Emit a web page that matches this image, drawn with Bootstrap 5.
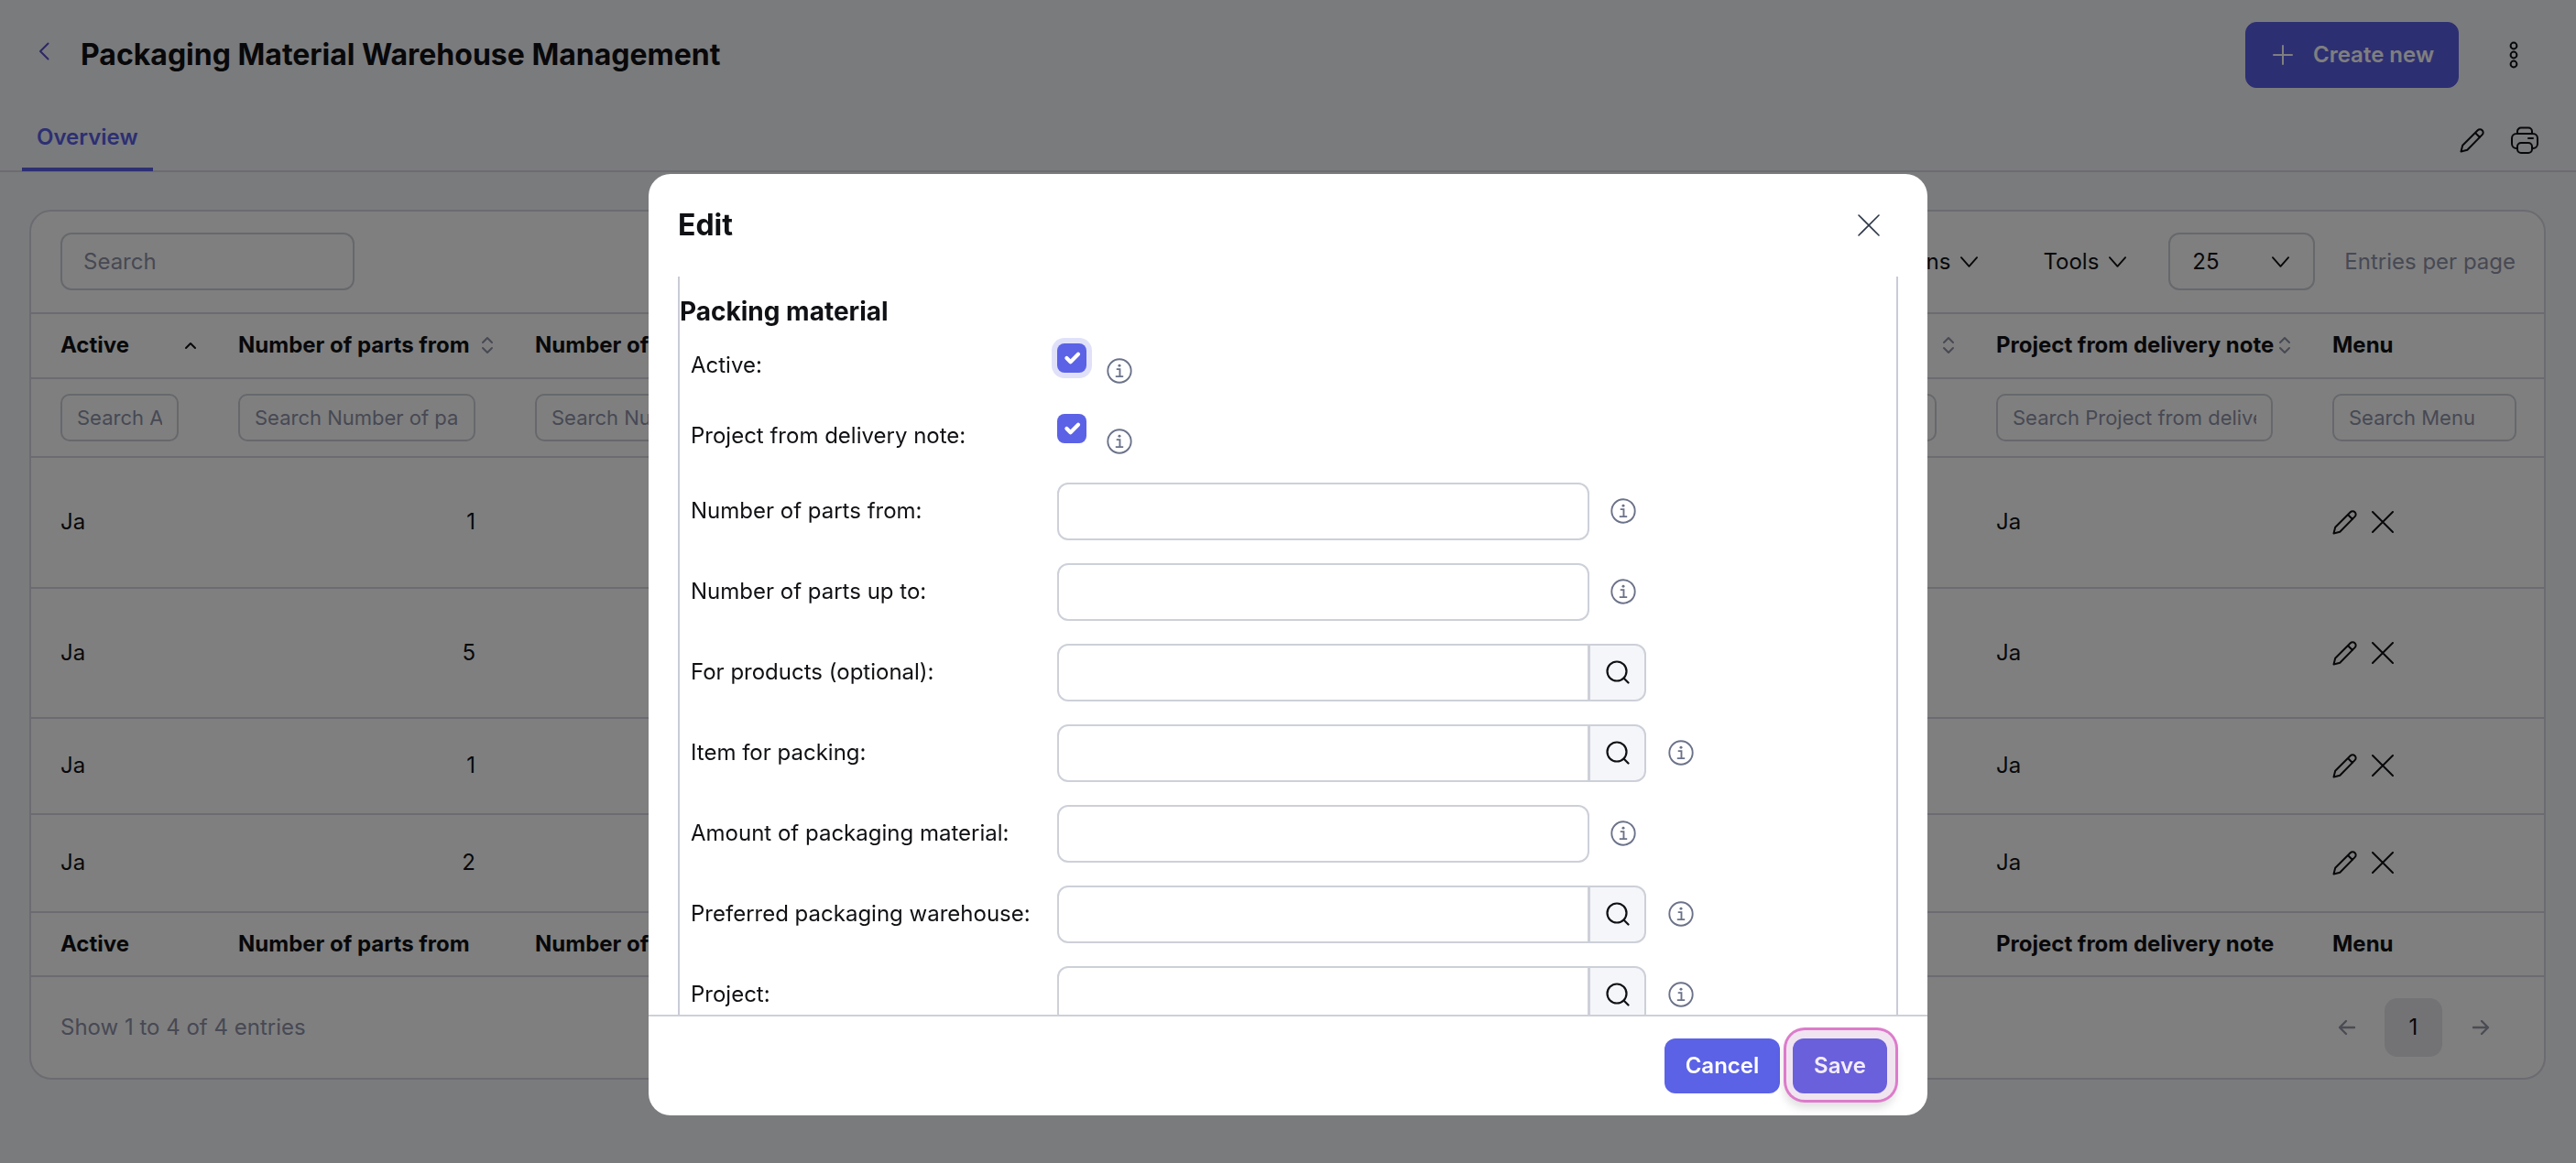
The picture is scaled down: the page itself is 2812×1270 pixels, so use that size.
<!DOCTYPE html>
<html lang="en">
<head>
    <meta charset="UTF-8">
    <meta name="viewport" content="width=device-width, initial-scale=1.0">
    <title>Packaging Material Warehouse Management</title>
    <link href="https://cdn.jsdelivr.net/npm/bootstrap@5.3.0/dist/css/bootstrap.min.css" rel="stylesheet">
    <style>
        body { font-family: Inter, "Liberation Sans", sans-serif; font-size: 24px; color: #101114; background: #f5f6fa; height: 1270px; }
        svg { display: block; flex: none; }
        .ico-line { fill: none; stroke: currentColor; stroke-width: 2; stroke-linecap: round; stroke-linejoin: round; }

        .top-bar { height: 120px; padding: 0 62px 0 42px; }
        .back-ico { color: #5a4fc8; margin-top: -8px; margin-right: 34px; }
        .page-title { font-size: 32px; font-weight: 700; line-height: 40px; margin: 0; }
        .create-btn { width: 233px; height: 72px; border-radius: 12px; font-size: 24px; font-weight: 600; background: #5b5fe6; border-color: #5b5fe6; color: #fff; gap: 22px; padding: 0 0 0 29px; }
        .more-ico { margin-left: 54px; }
        .tab-bar { height: 68px; padding: 0 41px 0 24px; border-bottom: 2px solid #d6d7e2; }
        .tab-bar .nav-link { height: 68px; padding: 13px 16px 0; font-size: 24px; font-weight: 600; line-height: 36px; color: #5b5fe6; border-bottom: 4px solid #5b5fe6; }
        .tab-icons { gap: 28px; }

        .list-card { margin: 41px 33px 0 32px; height: 950px; border: 2px solid #d6d7e2; border-radius: 24px; background: #fff; }
        .list-tools { height: 113px; padding: 0 31px 0 32px; border-bottom: 2px solid #d6d7e2; }
        .list-tools .form-control { width: 321px; padding-left: 23px; }
        .form-control, .form-select { height: 63px; font-size: 24px; border: 2px solid #cdd0d8; border-radius: 12px; color: #101114; }
        .form-control::placeholder { color: #8e92a8; }
        .tool-btn { font-size: 24px; color: #101114; border: 0; padding: 0; gap: 10px; }
        .tool-gap { margin-left: 70px; }
        .list-tools .form-select { width: 160px; margin: 0 32px 0 45px; padding: 0 0 0 24px; background-image: url("data:image/svg+xml,%3csvg xmlns='http://www.w3.org/2000/svg' viewBox='0 0 22 14'%3e%3cpath fill='none' stroke='%23101114' stroke-width='2' stroke-linecap='round' stroke-linejoin='round' d='M2 2l9 10 9-10'/%3e%3c/svg%3e"); background-position: right 25px center; background-size: 21px 14px; }
        .muted-txt { color: #8e92a8; }

        .list-table { table-layout: fixed; width: 2743px; margin: 0; font-size: 24px; --bs-table-bg: transparent; }
        .list-table col:nth-child(1) { width: 193px; }
        .list-table col:nth-child(2) { width: 324px; }
        .list-table col:nth-child(3) { width: 330px; }
        .list-table col:nth-child(4) { width: 320px; }
        .list-table col:nth-child(5) { width: 500px; }
        .list-table col:nth-child(6) { width: 445px; }
        .list-table col:nth-child(7) { width: 367px; }
        .list-table col:nth-child(8) { width: 265px; }
        .list-table > :not(caption) > * > * { border-bottom: 2px solid #d6d7e2; padding: 0 32px 0 33px; vertical-align: middle; color: #101114; white-space: nowrap; overflow: hidden; }
        .list-table th { font-weight: 700; }
        .list-table tr > :first-child { padding-left: 32px; }
        .list-table tr > :last-child { padding-right: 31px; }
        .head-row { height: 70px; }
        .head-row th { padding-right: 12px !important; }
        .filter-row { height: 86px; }
        .filter-row .form-control { height: 52px; font-size: 22px; padding: 0 16px; border-radius: 10px; font-weight: 400; }
        .list-table tbody tr:nth-child(1) { height: 143px; }
        .list-table tbody tr:nth-child(2) { height: 142px; }
        .list-table tbody tr:nth-child(3) { height: 105px; }
        .list-table tbody tr:nth-child(4) { height: 107px; }
        .row-icons { gap: 15px; }
        .sort-ico { color: #8e92a8; }
        .sort-up { color: #101114; }
        .list-foot { height: 112px; padding: 0 38px 0 32px; }
        .pager { gap: 11px; margin: 0; }
        .pager .page-link { width: 63px; height: 64px; border: 0; border-radius: 14px; background: transparent; color: #101114; font-size: 24px; display: flex; align-items: center; justify-content: center; padding: 0; }
        .pager .page-link.cur { background: #e6e6ec; }
        .pager .page-link.off { color: #9799a8; }
        .pager .page-link.off .ico-line { stroke-width: 2.4; }

        .modal-dialog.edit-dialog { max-width: 1396px; margin: 190px auto 0; }
        .edit-content { height: 1028px; border: 0; border-radius: 24px; overflow: hidden; }
        .edit-content .modal-header { height: 112px; flex: none; padding: 0 52px 0 32px; border: 0; }
        .modal-title { font-size: 32px; font-weight: 700; line-height: 40px; }
        .close-btn { border: 0; padding: 0; color: #2d3748; }
        .close-btn path { fill: none; stroke: currentColor; stroke-width: 1.6; stroke-linecap: round; }
        .edit-body { padding: 0 32px; overflow: hidden; flex: 1 1 0; min-height: 0; }
        .edit-set { border-left: 2px solid #c9cbd6; border-right: 2px solid #c9cbd6; padding-top: 21px; min-height: 820px; }
        .set-title { font-size: 28px; font-weight: 700; line-height: 34px; margin: 0 0 3px; }
        .fld-row { height: 88px; padding-left: 12px; }
        .fld-row.chk-row { height: 77px; align-items: flex-start !important; }
        .fld-label { width: 400px; flex: none; margin: 0; }
        .chk-row .fld-label { padding-top: 21px; line-height: 36px; }
        .fld-row .form-control { width: 581px; flex: none; }
        .fld-row .input-group { width: 644px; flex: none; }
        .fld-row .input-group-text { width: 63px; height: 63px; padding: 0; justify-content: center; background: #f5f6fa; border: 2px solid #cdd0d8; border-radius: 0 12px 12px 0; color: #101114; }
        .info-ico { color: #6b7289; margin-left: 23px; }
        .chk-row .form-check-input { width: 32px; height: 32px; margin: 15px 0 0; border: 0; border-radius: 8px; background-color: #5b62e6; background-size: 28px; }
        .chk-row .ring { box-shadow: 0 0 0 6px #e0e1f9; }
        .chk-row .info-ico { margin: 31px 0 0 22px; }
        .edit-content .modal-footer { height: 110px; flex: none; padding: 0 44px 0 0; border-top: 2px solid #cdd0d8; gap: 14px; align-items: flex-start; }
        .foot-btn { height: 60px; margin: 24px 0 0; padding: 0; font-size: 24px; font-weight: 600; border-radius: 12px; border: 0; color: #fff; background: #5b62e6; }
        .foot-cancel { width: 126px; }
        .foot-save { width: 103px; background: #6a60db; color: #f3ecfa; box-shadow: 1px -1px 0 8px #f0e4f1, 1px -1px 0 11px #dd7bcb, 0 6px 10px 10px rgba(0,0,0,.12); }
    </style>
</head>
<body class="overflow-hidden">
    <svg width="0" height="0" class="position-absolute">
        <defs>
            <symbol id="i-pencil" viewBox="0 0 28 28"><path class="ico-line" d="M1.500 26.500l1.700-6.800L19.700 3.200a3.400 3.400 0 0 1 4.900 0 3.400 3.400 0 0 1 0 4.900L8.300 24.800zM17 6l5 5"/></symbol>
            <symbol id="i-cross" viewBox="0 0 24 24"><path class="ico-line" d="M1 1l22 22M23 1L1 23"/></symbol>
            <symbol id="i-info" viewBox="0 0 30 30"><circle cx="15" cy="15" r="13.600" fill="none" stroke="currentColor" stroke-width="2"/><path fill="none" stroke="currentColor" stroke-width="2" d="M11.500 13h4v8M10.500 21.500h9"/><circle cx="15" cy="8.800" r="1.600" fill="currentColor"/></symbol>
            <symbol id="i-search" viewBox="0 0 26 26"><circle cx="12" cy="12" r="10.500" fill="none" stroke="currentColor" stroke-width="2.200"/><path fill="none" stroke="currentColor" stroke-width="2.200" stroke-linecap="round" d="M19.500 19.500l5 5"/></symbol>
            <symbol id="i-sort" viewBox="0 0 14 20"><path class="ico-line" d="M2 7l5-5 5 5M2 13l5 5 5-5"/></symbol>
            <symbol id="i-down" viewBox="0 0 22 14"><path class="ico-line" d="M2 2l9 10 9-10"/></symbol>
        </defs>
    </svg>

    <header class="top-bar d-flex align-items-center">
        <svg class="back-ico" width="12" height="20" viewBox="0 0 12 20"><path class="ico-line" d="M10.500 1.500L2 10l8.500 8.500"/></svg>
        <h1 class="page-title">Packaging Material Warehouse Management</h1>
        <button type="button" class="btn create-btn d-flex align-items-center ms-auto">
            <svg width="22" height="22" viewBox="0 0 22 22"><path class="ico-line" d="M11 1v20M1 11h20"/></svg>
            Create new
        </button>
        <svg class="more-ico" width="12" height="32" viewBox="0 0 12 32" fill="none" stroke="#101114" stroke-width="2"><circle cx="6" cy="6" r="3.400"/><circle cx="6" cy="16" r="3.400"/><circle cx="6" cy="26" r="3.400"/></svg>
    </header>

    <div class="tab-bar d-flex align-items-center justify-content-between">
        <ul class="nav">
            <li class="nav-item"><a class="nav-link" href="#">Overview</a></li>
        </ul>
        <div class="d-flex align-items-center tab-icons">
            <svg width="28" height="28"><use href="#i-pencil"/></svg>
            <svg width="30" height="30" viewBox="0 0 30 30"><path class="ico-line" d="M7 24H6a5 5 0 0 1-5-5v-6a5 5 0 0 1 5-5h18a5 5 0 0 1 5 5v6a5 5 0 0 1-5 5h-1M7 8V5.500a4 4 0 0 1 4-4h8a4 4 0 0 1 4 4V8M11 18h8a4 4 0 0 1 4 4v3a4 4 0 0 1-4 4h-8a4 4 0 0 1-4-4v-3a4 4 0 0 1 4-4zM19 13h5"/></svg>
        </div>
    </div>

    <div class="card list-card">
        <div class="list-tools d-flex align-items-center">
            <input type="text" class="form-control" placeholder="Search">
            <button type="button" class="btn tool-btn d-flex align-items-center ms-auto">Columns <svg width="21" height="14"><use href="#i-down"/></svg></button>
            <button type="button" class="btn tool-btn tool-gap d-flex align-items-center">Tools <svg width="21" height="14"><use href="#i-down"/></svg></button>
            <select class="form-select"><option>25</option></select>
            <span class="muted-txt">Entries per page</span>
        </div>
        <table class="table list-table">
            <colgroup><col><col><col><col><col><col><col><col></colgroup>
            <thead id="tableHead"></thead>
            <tbody id="tableBody"></tbody>
            <tfoot id="tableFoot"></tfoot>
        </table>
        <div class="list-foot d-flex align-items-center justify-content-between">
            <span class="muted-txt">Show 1 to 4 of 4 entries</span>
            <ul class="pagination pager">
                <li class="page-item"><a class="page-link off" href="#"><svg width="20" height="20" viewBox="0 0 20 20"><path class="ico-line" d="M18 10H3M9 3l-7 7 7 7"/></svg></a></li>
                <li class="page-item"><a class="page-link cur" href="#">1</a></li>
                <li class="page-item"><a class="page-link off" href="#"><svg width="20" height="20" viewBox="0 0 20 20"><path class="ico-line" d="M2 10h15M11 3l7 7-7 7"/></svg></a></li>
            </ul>
        </div>
    </div>

    <div class="modal-backdrop show"></div>
    <div class="modal d-block" tabindex="-1">
        <div class="modal-dialog edit-dialog">
            <div class="modal-content edit-content">
                <div class="modal-header">
                    <h5 class="modal-title">Edit</h5>
                    <button type="button" class="btn close-btn ms-auto" aria-label="Close"><svg width="24" height="24" viewBox="0 0 24 24"><path d="M1 1l22 22M23 1L1 23"/></svg></button>
                </div>
                <div class="modal-body edit-body">
                    <form class="edit-set" id="editForm">
                        <h4 class="set-title">Packing material</h4>
                    </form>
                </div>
                <div class="modal-footer">
                    <button type="button" class="btn foot-btn foot-cancel">Cancel</button>
                    <button type="button" class="btn foot-btn foot-save">Save</button>
                </div>
            </div>
        </div>
    </div>

    <script>
        const columns = ['Active', 'Number of parts from', 'Number of parts up to', 'Item for packing', 'Amount of packaging material', 'Project', 'Project from delivery note', 'Menu'];
        const rows = [1, 5, 1, 2];
        const fields = [
            ['Number of parts from:', false, true],
            ['Number of parts up to:', false, true],
            ['For products (optional):', true, false],
            ['Item for packing:', true, true],
            ['Amount of packaging material:', false, true],
            ['Preferred packaging warehouse:', true, true],
            ['Project:', true, true],
        ];
        const infoIcon = '<svg class="info-ico" width="28" height="28"><use href="#i-info"/></svg>';

        const sortIcon = (name, i) => {
            if (name === 'Menu') return '';
            if (i === 0) return '<svg class="sort-up" width="14" height="9" viewBox="0 0 14 9"><path class="ico-line" d="M2 7l5-5 5 5"/></svg>';
            return '<svg class="sort-ico" width="14" height="20"><use href="#i-sort"/></svg>';
        };

        document.getElementById('tableHead').innerHTML = `
            <tr class="head-row">${columns.map((name, i) => `<th><div class="d-flex align-items-center justify-content-between">${name}${sortIcon(name, i)}</div></th>`).join('')}</tr>
            <tr class="filter-row">${columns.map(name => `<th><input type="text" class="form-control" placeholder="Search ${name}"></th>`).join('')}</tr>`;

        document.getElementById('tableBody').innerHTML = rows.map(value => `
            <tr>
                <td>Ja</td>
                <td class="text-end">${value}</td>
                <td></td><td></td><td></td><td></td>
                <td>Ja</td>
                <td><div class="d-flex align-items-center row-icons"><svg width="28" height="28"><use href="#i-pencil"/></svg><svg width="24" height="24"><use href="#i-cross"/></svg></div></td>
            </tr>`).join('');

        document.getElementById('tableFoot').innerHTML = `<tr class="head-row">${columns.map(name => `<th>${name}</th>`).join('')}</tr>`;

        const form = document.getElementById('editForm');
        ['Active:', 'Project from delivery note:'].forEach((label, i) => {
            form.insertAdjacentHTML('beforeend', `
                <div class="fld-row chk-row d-flex">
                    <label class="fld-label">${label}</label>
                    <input class="form-check-input ${i === 0 ? 'ring' : ''}" type="checkbox" checked>
                    ${infoIcon}
                </div>`);
        });
        fields.forEach(([label, lookup, info]) => {
            const control = lookup
                ? `<div class="input-group"><input type="text" class="form-control"><span class="input-group-text"><svg width="26" height="26"><use href="#i-search"/></svg></span></div>`
                : '<input type="text" class="form-control">';
            form.insertAdjacentHTML('beforeend', `
                <div class="fld-row d-flex align-items-center">
                    <label class="fld-label">${label}</label>
                    ${control}
                    ${info ? infoIcon : ''}
                </div>`);
        });
    </script>
    <script src="https://cdn.jsdelivr.net/npm/bootstrap@5.3.0/dist/js/bootstrap.bundle.min.js"></script>
</body>
</html>
